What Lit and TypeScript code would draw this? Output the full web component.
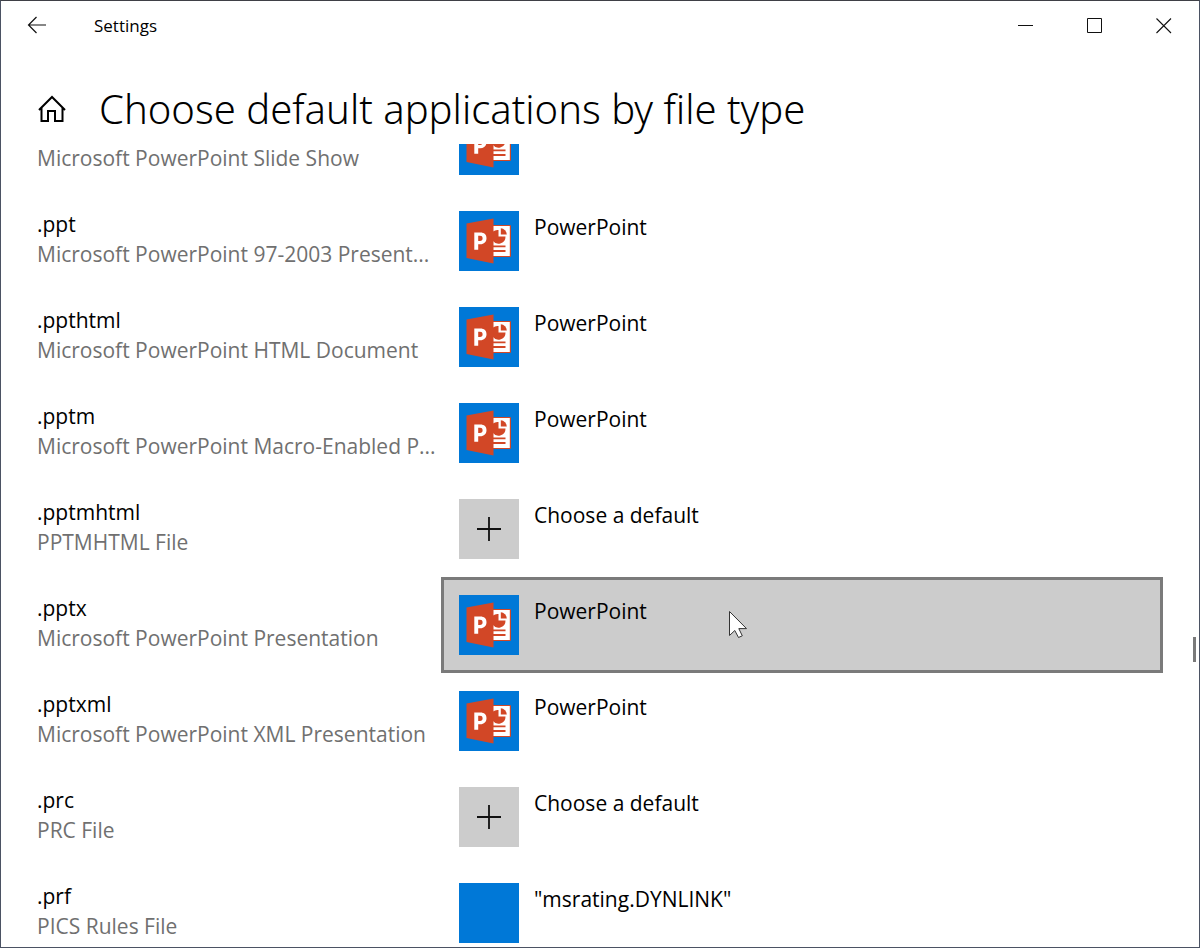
import { LitElement, html, css, svg } from "lit";
import { customElement, property, query } from "lit/decorators.js";
import { classMap } from "lit/directives/class-map.js";

type AppIcon = "powerpoint" | "none" | "blank";

interface FileType {
  ext: string;
  description: string;
  app: string;
  icon: AppIcon;
  active?: boolean;
}

const FILE_TYPES: FileType[] = [
  { ext: "", description: "Microsoft PowerPoint Slide Show", app: "", icon: "powerpoint" },
  { ext: ".ppt", description: "Microsoft PowerPoint 97-2003 Present...", app: "PowerPoint", icon: "powerpoint" },
  { ext: ".ppthtml", description: "Microsoft PowerPoint HTML Document", app: "PowerPoint", icon: "powerpoint" },
  { ext: ".pptm", description: "Microsoft PowerPoint Macro-Enabled P...", app: "PowerPoint", icon: "powerpoint" },
  { ext: ".pptmhtml", description: "PPTMHTML File", app: "Choose a default", icon: "none" },
  { ext: ".pptx", description: "Microsoft PowerPoint Presentation", app: "PowerPoint", icon: "powerpoint", active: true },
  { ext: ".pptxml", description: "Microsoft PowerPoint XML Presentation", app: "PowerPoint", icon: "powerpoint" },
  { ext: ".prc", description: "PRC File", app: "Choose a default", icon: "none" },
  { ext: ".prf", description: "PICS Rules File", app: "\"msrating.DYNLINK\"", icon: "blank" },
];

const powerpointMark = svg`
  <rect x="33" y="14" width="19" height="32" rx="1" fill="#d24726" />
  <rect x="33" y="15" width="17.800" height="30" fill="#fff" />
  <path d="M34 20.500a7 7 0 0 1 5.500-1.500v6.500H46.500A7 7 0 0 1 34 30z" fill="#d24726" />
  <path d="M41.800 17.300a6.500 6.500 0 0 1 6 6.200h-6z" fill="#d24726" />
  <path d="M34 35.300h12.500M34 40h12.500" stroke="#d24726" stroke-width="1.800" />
  <path d="M7.500 12.500 34.500 7.500v45L7.500 47z" fill="#d24726" />
  <path fill-rule="evenodd" d="M15.300 21.500h6c4 0 6.200 2.100 6.200 5.700s-2.400 6-6.300 6H19.200v5.600H15.300zM19.200 24.800v5.100h1.800c1.700 0 2.600-.9 2.600-2.600s-.9-2.500-2.600-2.500z" fill="#fff" />`;

const plusMark = svg`<path d="M18 30h24M30 18v24" stroke="#111" stroke-width="1.8" />`;

@customElement("app-tile")
export class AppTile extends LitElement {
  @property() icon: AppIcon = "blank";

  static styles = css`
    :host {
      display: block;
      flex: none;
      width: 60px;
      height: 60px;
    }
    .tile {
      display: block;
      width: 100%;
      height: 100%;
      background: #0078d7;
    }
    .tile.unset {
      background: #ccc;
    }
  `;

  render() {
    return html`<svg class=${classMap({ tile: true, unset: this.icon === "none" })} viewBox="0 0 60 60" aria-hidden="true">
      ${this.icon === "powerpoint" ? powerpointMark : this.icon === "none" ? plusMark : null}
    </svg>`;
  }
}

@customElement("app-root")
export class AppRoot extends LitElement {
  @query(".list") private list!: HTMLElement;

  static styles = css`
    :host {
      display: block;
      height: 100vh;
      font-family: "Open Sans", "Noto Sans", sans-serif;
      color: #000;
    }
    * {
      box-sizing: border-box;
    }
    button {
      font: inherit;
      color: inherit;
      background: none;
      border: 0;
      padding: 0;
      margin: 0;
    }
    svg {
      display: block;
    }
    .window {
      position: relative;
      display: flex;
      flex-direction: column;
      height: 100%;
      background: #fff;
      border: 1px solid #4b5263;
      border-top-color: #3f4046;
    }
    .titlebar {
      display: flex;
      align-items: center;
      height: 50px;
      flex: none;
      padding-right: 1px;
    }
    .back {
      display: grid;
      place-items: center;
      width: 72px;
      height: 48px;
    }
    .caption {
      flex: 1;
      padding-left: 21px;
      font-size: 17px;
      line-height: 24px;
    }
    .control {
      display: grid;
      place-items: center;
      width: 69px;
      height: 48px;
    }
    .header {
      display: flex;
      align-items: center;
      gap: 32px;
      height: 93px;
      flex: none;
      padding: 22px 36px 0;
    }
    .title {
      margin: 0;
      font-family: "Noto Sans", "Open Sans", sans-serif;
      font-size: 40px;
      line-height: 56px;
      font-weight: 300;
      white-space: nowrap;
    }
    .list {
      flex: 1;
      min-height: 0;
      margin: 0;
      padding: 0 36px;
      list-style: none;
      overflow-y: auto;
      scrollbar-width: none;
    }
    .row {
      display: grid;
      grid-template-columns: 404px minmax(0, 1fr);
      height: 96px;
      font-size: 21px;
      line-height: 30px;
    }
    .type {
      padding-top: 16px;
      min-width: 0;
    }
    .ext,
    .description {
      display: block;
      min-height: 30px;
      overflow: hidden;
      white-space: nowrap;
    }
    .description {
      color: #707070;
    }
    .choice {
      display: flex;
      align-items: flex-start;
      gap: 15px;
      padding: 15px;
      border: 3px solid transparent;
      text-align: left;
    }
    .choice.active {
      background: #ccc;
      border-color: #7a7a7a;
    }
    .app-name {
      line-height: 32px;
    }
    .thumb {
      position: absolute;
      right: 3px;
      top: 636px;
      width: 3px;
      height: 25px;
      background: #7a7a7a;
    }
    .pointer {
      position: absolute;
      left: 727px;
      top: 609px;
    }
  `;

  firstUpdated() {
    // Open the list part-way through its first entry.
    this.list.scrollTop = 47;
  }

  private renderRow(item: FileType) {
    return html`<li class="row">
      <div class="type">
        <span class="ext">${item.ext}</span>
        <span class="description">${item.description}</span>
      </div>
      <button class=${classMap({ choice: true, active: !!item.active })} type="button">
        <app-tile .icon=${item.icon}></app-tile>
        <span class="app-name">${item.app}</span>
      </button>
    </li>`;
  }

  render() {
    return html`<div class="window">
      <div class="titlebar">
        <button class="back" type="button" aria-label="Back">
          <svg width="20" height="20" viewBox="0 0 20 20" fill="none" stroke="#111" stroke-width="1.200">
            <path d="M19 9H1.500M9.500 1 1.500 9l8 8" />
          </svg>
        </button>
        <span class="caption">Settings</span>
        <button class="control" type="button" aria-label="Minimize">
          <svg width="16" height="16" viewBox="0 0 16 16"><path d="M0 7.500h15" stroke="#111" /></svg>
        </button>
        <button class="control" type="button" aria-label="Maximize">
          <svg width="16" height="16" viewBox="0 0 16 16"><path d="M.5.500h14v14H.5z" fill="none" stroke="#111" /></svg>
        </button>
        <button class="control" type="button" aria-label="Close">
          <svg width="16" height="16" viewBox="0 0 16 16"><path d="M.5.500l14.500 14.500M15 .500.500 15" stroke="#111" stroke-width="1.100" /></svg>
        </button>
      </div>
      <header class="header">
        <button type="button" aria-label="Home">
          <svg width="30" height="28" viewBox="0 0 30 28" fill="none" stroke="#000" stroke-width="2">
            <path d="M2 15 15 2l13 13M4.500 13V26h6.500v-10h7V26h7.500V13" />
          </svg>
        </button>
        <h1 class="title">Choose default applications by file type</h1>
      </header>
      <ul class="list">${FILE_TYPES.map((item) => this.renderRow(item))}</ul>
      <div class="thumb"></div>
      <svg class="pointer" width="20" height="30" viewBox="0 0 20 30" aria-hidden="true">
        <path d="M1.500 1.500v24l5.300-5 3.700 7 3.800-1.700-3.500-7.200h7.700z" fill="#fff" stroke="#333" />
      </svg>
    </div>`;
  }
}
